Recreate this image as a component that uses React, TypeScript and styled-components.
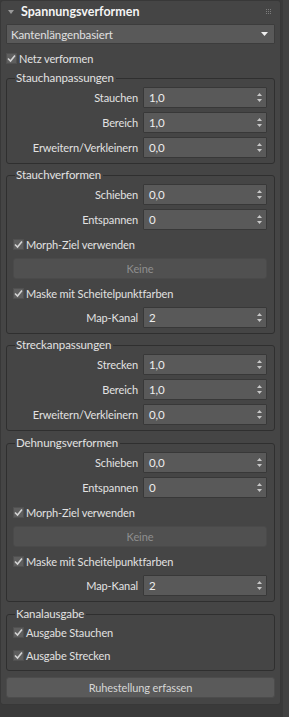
import React from "react";
import styled, { createGlobalStyle } from "styled-components";

const Global = createGlobalStyle`
  html, body { margin: 0; padding: 0; background: #3a3a3a; }
  body {
    font-family: Lato, "Open Sans", sans-serif;
    font-size: 11px;
    letter-spacing: -0.1px;
    color: #dcdcdc;
  }
  * { box-sizing: border-box; }
`;

const Frame = styled.div`
  display: flex;
  width: 289px;
  height: 717px;
  background: #3a3a3a;
`;

const Panel = styled.div`
  width: 281px;
  height: 705px;
  background: #454545;
  border: 1px solid #383838;
  border-radius: 3px;
  padding: 0 5px 5px 5px;
  display: flex;
  flex-direction: column;
`;

const ScrollStrip = styled.div`
  width: 6px;
  margin-left: 2px;
  height: 717px;
  background: #424242;
`;

const Header = styled.div`
  height: 23px;
  display: flex;
  align-items: center;
  padding-bottom: 2px;
`;

const Title = styled.span`
  font-weight: 700;
  font-size: 12.5px;
  letter-spacing: 0;
  color: #f4f4f4;
  margin-left: 7px;
`;

const Grip = styled.svg`
  margin-left: auto;
  margin-right: 3px;
`;

const Dropdown = styled.div`
  height: 20px;
  background: #595959;
  border: 1px solid #3c3c3c;
  border-radius: 1px;
  display: flex;
  align-items: center;
  padding: 0 6px 0 4px;
  font-size: 11.5px;
  color: #e0e0e0;
`;

const CheckRow = styled.div<{ $h: number }>`
  height: ${(p) => p.$h}px;
  display: flex;
  align-items: center;
  color: #e2e2e2;
`;

const Box = styled.span`
  width: 11px;
  height: 11px;
  background: #5e5e5e;
  border: 1px solid #505050;
  margin-right: 2px;
  display: inline-flex;
  align-items: center;
  justify-content: center;
`;

const Group = styled.fieldset<{ $mt: number }>`
  margin: ${(p) => p.$mt}px 0 0 0;
  padding: 0 7px 5px 6px;
  border: 1px solid #2f2f2f;
  border-radius: 3px;
  min-width: 0;
`;

const Legend = styled.legend`
  padding: 0 2px 0 1px;
  margin-left: 2px;
  line-height: 14px;
  font-size: 11.5px;
  color: #e2e2e2;
`;

const Stack = styled.div<{ $pt: number; $gap: number }>`
  display: flex;
  flex-direction: column;
  gap: ${(p) => p.$gap}px;
  padding-top: ${(p) => p.$pt}px;
`;

const FieldRow = styled.div`
  display: grid;
  grid-template-columns: 1fr 124px;
  column-gap: 5px;
  align-items: center;
  height: 21px;
`;

const Label = styled.span`
  text-align: right;
  white-space: nowrap;
  color: #e2e2e2;
`;

const Spinner = styled.div`
  height: 21px;
  background: #595959;
  border: 1px solid #383838;
  border-radius: 1px;
  display: flex;
  align-items: center;
  padding: 0 4px 0 5px;
  font-size: 11.5px;
  color: #ededed;
`;

const SpinIcon = styled.svg`
  margin-left: auto;
`;

const Button = styled.div<{ $disabled?: boolean }>`
  height: 21px;
  flex-shrink: 0;
  background: ${(p) => (p.$disabled ? "#505050" : "#5a5a5a")};
  border: 1px solid ${(p) => (p.$disabled ? "#4a4a4a" : "#4c4c4c")};
  border-radius: 3px;
  display: flex;
  align-items: center;
  justify-content: center;
  color: ${(p) => (p.$disabled ? "#8e8e8e" : "#d6d6d6")};
`;

const Arrows = () => (
  <SpinIcon width="5" height="9" viewBox="0 0 5 9">
    <polygon points="2.5,0 5,3 0,3" fill="#c8c8c8" />
    <polygon points="0,6 5,6 2.5,9" fill="#c8c8c8" />
  </SpinIcon>
);

const Check = () => (
  <svg width="9" height="9" viewBox="0 0 9 9">
    <path d="M1 4.5 L3.5 7 L8 1.5" stroke="#d4d4d4" strokeWidth="1.6" fill="none" />
  </svg>
);

const CheckItem = ({ label, h }: { label: string; h: number }) => (
  <CheckRow $h={h}>
    <Box>
      <Check />
    </Box>
    {label}
  </CheckRow>
);

const Field = ({ label, value }: { label: string; value: string }) => (
  <FieldRow>
    <Label>{label}</Label>
    <Spinner>
      {value}
      <Arrows />
    </Spinner>
  </FieldRow>
);

const DeformGroup = ({ title, mt }: { title: string; mt: number }) => (
  <Group $mt={mt}>
    <Legend>{title}</Legend>
    <Stack $pt={2} $gap={4}>
      <Field label="Schieben" value="0,0" />
      <Field label="Entspannen" value="0" />
      <CheckItem label="Morph-Ziel verwenden" h={20} />
      <Button $disabled>Keine</Button>
      <CheckItem label="Maske mit Scheitelpunktfarben" h={20} />
      <Field label="Map-Kanal" value="2" />
    </Stack>
  </Group>
);

const AdjustGroup = ({ title, first, mt }: { title: string; first: string; mt: number }) => (
  <Group $mt={mt}>
    <Legend>{title}</Legend>
    <Stack $pt={2} $gap={4}>
      <Field label={first} value="1,0" />
      <Field label="Bereich" value="1,0" />
      <Field label="Erweitern/Verkleinern" value="0,0" />
    </Stack>
  </Group>
);

export default function App() {
  return (
    <>
      <Global />
      <Frame>
        <Panel>
          <Header>
            <svg width="6" height="4" viewBox="0 0 6 4" style={{ marginLeft: 2 }}>
              <polygon points="0,0 6,0 3,4" fill="#9a9a9a" />
            </svg>
            <Title>Spannungsverformen</Title>
            <Grip width="6" height="5" viewBox="0 0 6 5">
              {[0, 2, 4].map((y) =>
                [0, 2, 4].map((x) => <rect key={`${x}-${y}`} x={x} y={y} width="1" height="1" fill="#7c7c7c" />)
              )}
            </Grip>
          </Header>
          <Dropdown>
            Kantenlängenbasiert
            <svg width="7" height="4" viewBox="0 0 7 4" style={{ marginLeft: "auto" }}>
              <polygon points="0,0 7,0 3.5,4" fill="#f0f0f0" />
            </svg>
          </Dropdown>
          <Stack $pt={4} $gap={0}>
            <CheckItem label="Netz verformen" h={20} />
          </Stack>
          <AdjustGroup title="Stauchanpassungen" first="Stauchen" mt={3} />
          <DeformGroup title="Stauchverformen" mt={4} />
          <AdjustGroup title="Streckanpassungen" first="Strecken" mt={4} />
          <DeformGroup title="Dehnungsverformen" mt={5} />
          <Group $mt={5}>
            <Legend>Kanalausgabe</Legend>
            <Stack $pt={1} $gap={3}>
              <CheckItem label="Ausgabe Stauchen" h={20} />
              <CheckItem label="Ausgabe Strecken" h={20} />
            </Stack>
          </Group>
          <Stack $pt={6} $gap={0}>
            <Button>Ruhestellung erfassen</Button>
          </Stack>
        </Panel>
        <ScrollStrip />
      </Frame>
    </>
  );
}
